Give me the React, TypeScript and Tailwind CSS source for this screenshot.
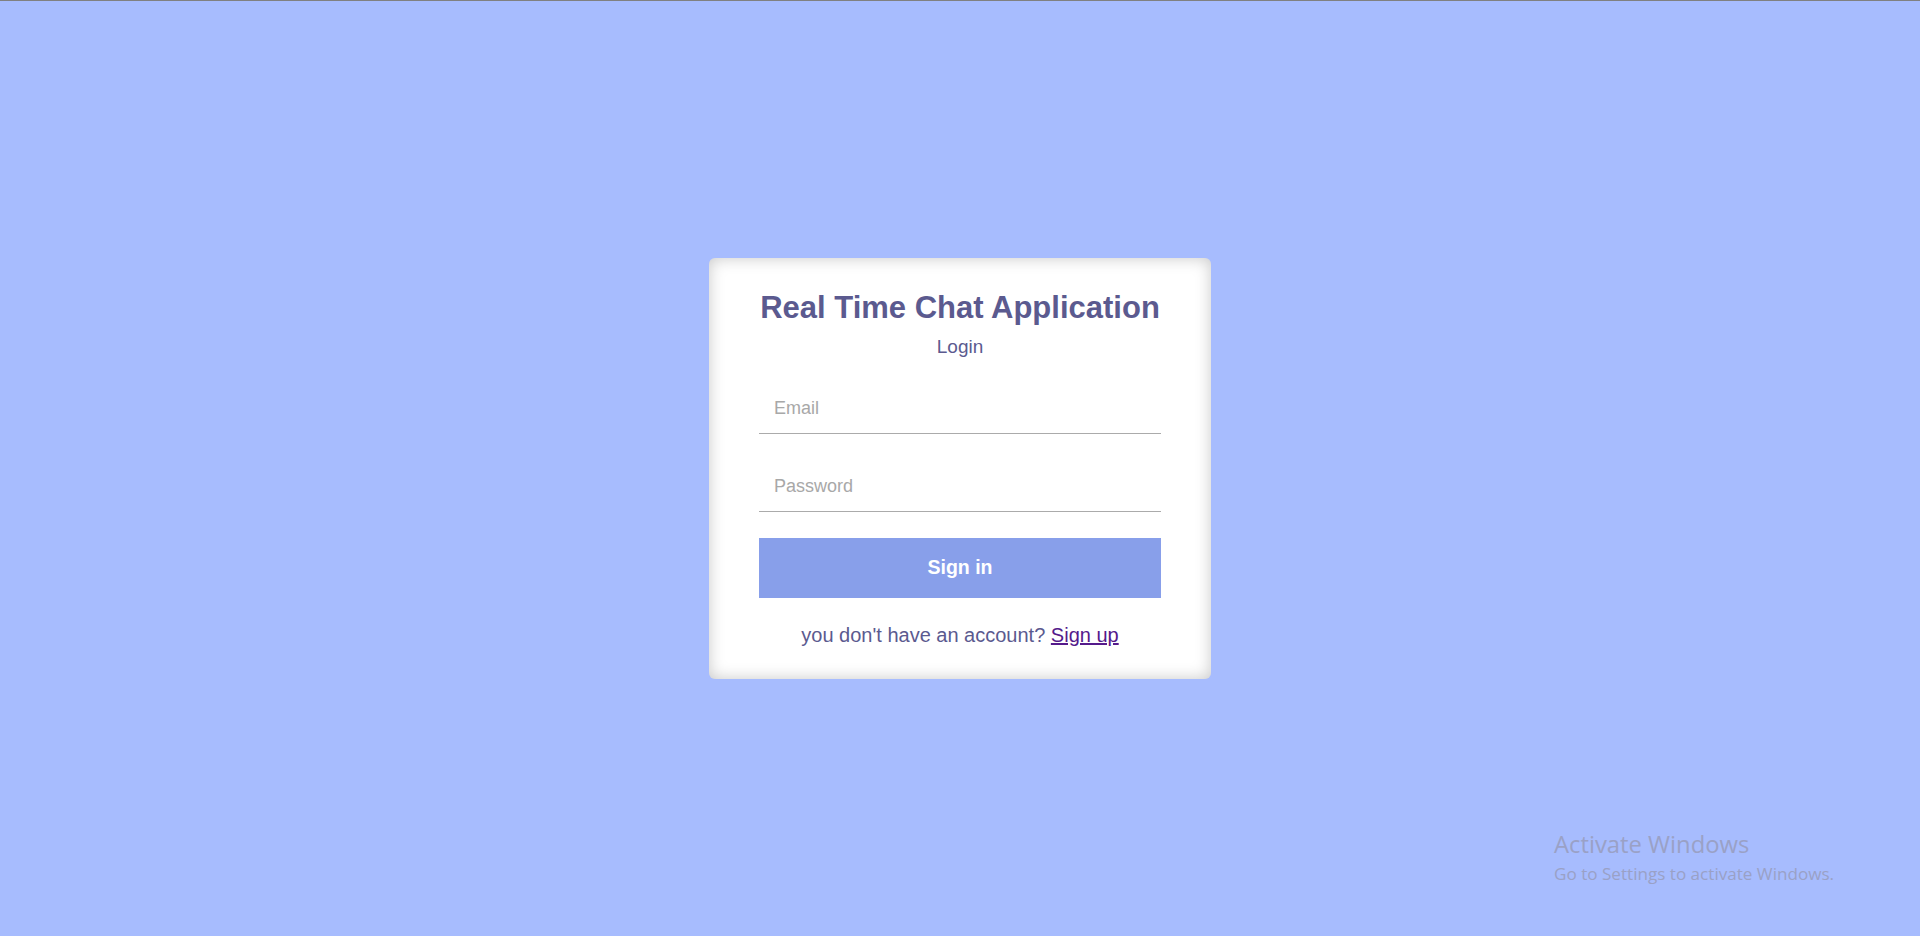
import React, { useState } from "react";

const LoginCard = () => {
  const [email, setEmail] = useState("");
  const [password, setPassword] = useState("");

  return (
    <div className="w-[502px] rounded-[6px] bg-white px-[50px] pt-[32px] pb-[32px] shadow-[inset_0_0_16px_rgba(0,0,0,0.22)] text-center">
      <h1 className="-mx-[10px] whitespace-nowrap text-[31px] font-bold leading-[35px] text-[#5b5a8f]">
        Real Time Chat Application
      </h1>
      <p className="mt-[11px] text-[19px] leading-[22px] text-[#5b5a8f]">Login</p>

      <form
        className="mt-[26px] flex flex-col"
        onSubmit={(e) => e.preventDefault()}
      >
        <input
          type="email"
          value={email}
          onChange={(e) => setEmail(e.target.value)}
          placeholder="Email"
          className="h-[50px] w-full border-b border-[#ababab] px-[15px] text-[18px] text-[#5b5a8f] outline-none placeholder:text-[#a8a8a8]"
        />
        <input
          type="password"
          value={password}
          onChange={(e) => setPassword(e.target.value)}
          placeholder="Password"
          className="mt-[28px] h-[50px] w-full border-b border-[#ababab] px-[15px] text-[18px] text-[#5b5a8f] outline-none placeholder:text-[#a8a8a8]"
        />
        <button
          type="submit"
          className="mt-[26px] h-[60px] w-full bg-[#889fea] text-[19.5px] font-bold text-white"
        >
          Sign in
        </button>
      </form>

      <p className="mt-[26px] text-[20px] leading-[23px] text-[#5b5a8f]">
        you don't have an account?{" "}
        <a href="#" className="text-[#551a8b] underline">
          Sign up
        </a>
      </p>
    </div>
  );
};

export default function App() {
  return (
    <div className="relative flex h-[936px] w-full items-center justify-center overflow-hidden border-t border-[#808080] bg-[#a7bcfe] font-['Liberation_Sans',Arial,sans-serif]">
      <LoginCard />

      {/* windows watermark */}
      <div className="absolute left-[1554px] top-[829px] font-['Open_Sans','Noto_Sans',sans-serif] text-[#9aa1c6]">
        <div className="text-[23.8px] leading-[28px]">Activate Windows</div>
        <div className="mt-[6px] text-[17.1px] leading-[20px]">
          Go to Settings to activate Windows.
        </div>
      </div>
    </div>
  );
}
